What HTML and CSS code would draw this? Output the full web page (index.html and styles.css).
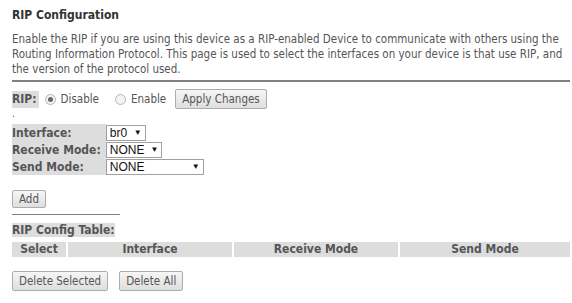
FILE: index.html
```html
<!DOCTYPE html>
<html lang="en">
<head>
    <meta charset="UTF-8">
    <title>RIP Configuration</title>
    <link rel="stylesheet" href="styles.css">
</head>
<body>
    <h2 class="title">RIP Configuration</h2>
    <p class="intro">Enable the RIP if you are using this device as a RIP-enabled Device to communicate with others using the Routing Information Protocol. This page is used to select the interfaces on your device is that use RIP, and the version of the protocol used.</p>
    <hr class="rule">

    <div class="rip-row">
        <span class="label">RIP:</span>
        <label class="radio first"><span class="dot checked"></span>Disable</label>
        <label class="radio"><span class="dot"></span>Enable</label>
        <button class="btn">Apply Changes</button>
    </div>
    <div class="tick">.</div>

    <table class="form-table">
        <tr>
            <td class="label">Interface:</td>
            <td><span class="sel w-iface">br0<span class="arrow">&#9660;</span></span></td>
        </tr>
        <tr>
            <td class="label">Receive Mode:</td>
            <td><span class="sel w-recv">NONE<span class="arrow">&#9660;</span></span></td>
        </tr>
        <tr>
            <td class="label">Send Mode:</td>
            <td><span class="sel w-send">NONE<span class="arrow">&#9660;</span></span></td>
        </tr>
    </table>

    <button class="btn add-btn">Add</button>
    <hr class="rule short">

    <div class="table-title"><span class="label">RIP Config Table:</span></div>
    <table class="cfg-table">
        <tr>
            <th class="c-sel">Select</th>
            <th class="c-if">Interface</th>
            <th class="c-rx">Receive Mode</th>
            <th class="c-tx">Send Mode</th>
        </tr>
    </table>

    <div class="actions">
        <button class="btn">Delete Selected</button>
        <button class="btn">Delete All</button>
    </div>
</body>
</html>
```

FILE: styles.css
```css
body {
    margin: 0;
    padding: 0 2px 0 12px;
    font-family: "DejaVu Sans Condensed", "DejaVu Sans", sans-serif;
    font-size: 11.5px;
    color: #555;
    background: #fff;
}
.title {
    margin: 8px 0 0;
    font-size: 12px;
    font-weight: bold;
    color: #333;
    line-height: 15px;
}
.intro {
    margin: 9px 0 0;
    line-height: 15px;
    width: 558px;
}
.rule {
    margin: 3px 0 0;
    border: 0;
    border-top: 2px solid #808080;
    width: 558px;
}
.rule.short {
    width: 108px;
    margin-top: 6px;
    border-top-width: 1px;
}
.label {
    background: #ddd;
    font-weight: bold;
    font-size: 12px;
    color: #555;
    white-space: nowrap;
}
.rip-row {
    display: flex;
    align-items: center;
    margin-top: 7px;
    height: 20px;
}
.rip-row .label {
    padding: 1px 2px 2px 0;
    margin-right: 6px;
}
.radio {
    display: flex;
    align-items: center;
    margin-right: 9px;
}
.radio.first {
    margin-right: 16px;
}
.dot {
    display: inline-block;
    width: 9px;
    height: 9px;
    border: 1px solid #b5b5b5;
    border-radius: 50%;
    margin-right: 5px;
    position: relative;
    background: #f4f4f4;
}
.dot.checked::after {
    content: "";
    position: absolute;
    left: 2px;
    top: 2px;
    width: 5px;
    height: 5px;
    border-radius: 50%;
    background: #666;
}
.btn {
    font-family: inherit;
    font-size: 11.5px;
    color: #555;
    background: linear-gradient(#f6f6f6, #dedede);
    border: 1px solid #acacac;
    border-radius: 2px;
    padding: 1px 6px;
    height: 20px;
}
.tick {
    height: 12px;
    line-height: 8px;
    font-size: 10px;
    margin-top: 1px;
}
.form-table {
    border-collapse: collapse;
    margin-top: 2px;
}
.form-table td {
    padding: 0;
    height: 17px;
}
.form-table td.label {
    width: 88px;
    padding-right: 5px;
}
.sel {
    display: inline-flex;
    align-items: center;
    justify-content: space-between;
    height: 14px;
    border: 1px solid #a0a0a0;
    padding: 0 3px;
    font-family: "Liberation Sans", Arial, sans-serif;
    font-size: 12px;
    color: #111;
    background: #fff;
    box-sizing: content-box;
}
.arrow {
    font-size: 8px;
    margin-left: 6px;
}
.w-iface { width: 32px; }
.w-recv { width: 48px; }
.w-send { width: 90px; }
.add-btn {
    margin-top: 15px;
    display: block;
    height: 18px;
}
.table-title {
    margin-top: 8px;
    line-height: 15px;
}
.cfg-table {
    border-collapse: separate;
    border-spacing: 2px 0;
    margin: 4px 0 0 -2px;
    width: 562px;
}
.cfg-table th {
    background: #ddd;
    font-weight: bold;
    font-size: 12px;
    color: #555;
    padding: 0;
    height: 15px;
    line-height: 15px;
}
.c-sel { width: 54px; }
.c-if { width: 164px; }
.c-rx { width: 164px; }
.actions {
    margin-top: 14px;
    display: flex;
    gap: 11px;
}
```
